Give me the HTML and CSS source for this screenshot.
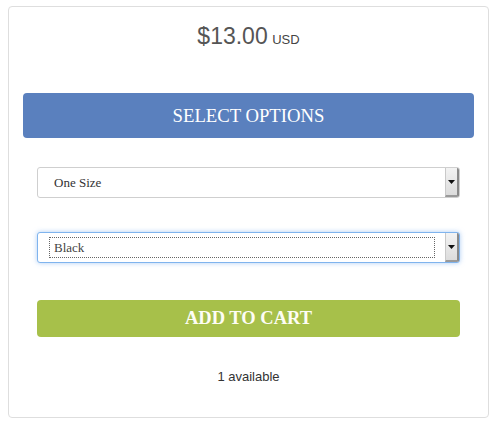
FILE: index.html
```html
<!DOCTYPE html>
<html>
<head>
<meta charset="utf-8">
<link rel="stylesheet" href="styles.css">
</head>
<body>
<div class="card">
  <div class="price"><span class="amount">$13.00</span> <span class="currency">USD</span></div>
  <div class="bar">SELECT OPTIONS</div>
  <div class="options">
    <div class="select">
      <select class="field"><option>One Size</option></select>
      <span class="arrow"><svg width="7" height="4" viewBox="0 0 7 4"><path d="M0 0H7L3.5 4Z" fill="#111"/></svg></span>
    </div>
    <div class="select focused">
      <select class="field ring"><option>Black</option></select>
      <span class="arrow"><svg width="7" height="4" viewBox="0 0 7 4"><path d="M0 0H7L3.5 4Z" fill="#111"/></svg></span>
    </div>
    <button class="cart">ADD TO CART</button>
    <div class="stock">1 available</div>
  </div>
</div>
</body>
</html>
```
FILE: styles.css
```css
html, body {
  margin: 0;
  padding: 0;
  background: #fff;
}
.card {
  box-sizing: border-box;
  width: 481px;
  height: 412px;
  margin: 6px 0 0 8px;
  border: 1px solid #dedede;
  border-radius: 4px;
  padding: 0 14px;
  display: flex;
  flex-direction: column;
}
.price {
  margin-top: 14px;
  height: 30px;
  line-height: 30px;
  text-align: center;
  font-family: "Liberation Sans", Arial, sans-serif;
  color: #555;
}
.amount {
  font-size: 23px;
}
.currency {
  font-size: 13px;
  color: #444;
}
.bar {
  margin-top: 42px;
  height: 45px;
  line-height: 45px;
  background: #5a80be;
  border-radius: 4px;
  color: #fff;
  text-align: center;
  font-family: "Liberation Serif", "Times New Roman", serif;
  font-size: 18.7px;
}
.options {
  padding: 0 14px;
  display: flex;
  flex-direction: column;
}
.select {
  box-sizing: border-box;
  height: 31px;
  margin-top: 29px;
  border: 1px solid #cfcfcf;
  border-radius: 3px;
  display: flex;
  align-items: stretch;
  background: #fff;
}
.select.focused {
  margin-top: 34px;
  border-color: #7fb4ee;
  box-shadow: 0 0 5px rgba(110, 165, 235, 0.55);
}
.field {
  appearance: none;
  -webkit-appearance: none;
  flex: 1;
  min-width: 0;
  margin: 4px 10px 4px 11px;
  padding: 0 4px;
  border: 1px solid transparent;
  background: transparent;
  font-family: "Liberation Serif", "Times New Roman", serif;
  font-size: 13px;
  color: #333;
  outline: none;
}
.field.ring {
  border: 1px dotted #666;
  color: #444;
}
.arrow {
  box-sizing: border-box;
  width: 14px;
  display: flex;
  align-items: center;
  justify-content: center;
  background: linear-gradient(#f3f3f3, #dcdcdc);
  border-left: 1px solid #c9c9c9;
  border-right: 2px solid #8a8a8a;
  border-bottom: 2px solid #9a9a9a;
  border-radius: 0 2px 2px 0;
}
.cart {
  margin-top: 37px;
  height: 37px;
  border: none;
  border-radius: 4px;
  background: #a7c04a;
  color: #fdfdf5;
  font-family: "Liberation Serif", "Times New Roman", serif;
  font-weight: bold;
  font-size: 18.5px;
  padding: 0;
}
.stock {
  margin-top: 32px;
  line-height: 16px;
  text-align: center;
  font-family: "Liberation Sans", Arial, sans-serif;
  font-size: 13px;
  color: #333;
}
```
